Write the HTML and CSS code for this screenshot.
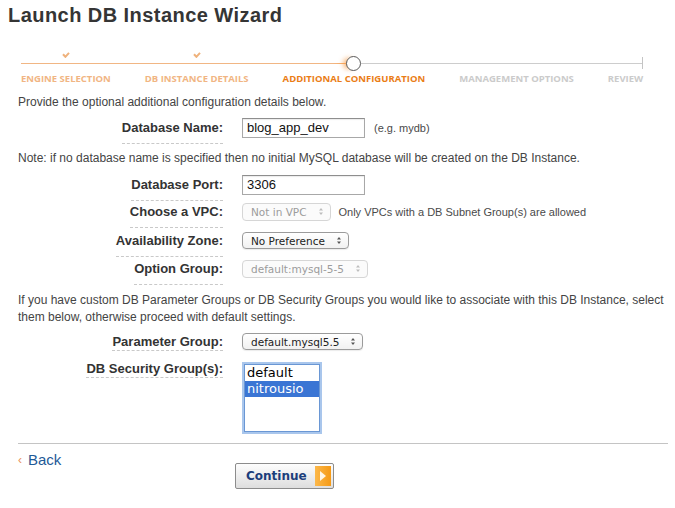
FILE: index.html
```html
<!DOCTYPE html>
<html>
<head>
<meta charset="utf-8">
<title>Launch DB Instance Wizard</title>
<link rel="stylesheet" href="styles.css">
</head>
<body>
<h1 class="title">Launch DB Instance Wizard</h1>

<div class="wizard-steps">
  <div class="step done">
    <span class="marker"><svg class="check" width="8" height="6" viewBox="0 0 8 6"><path d="M1 2.2 L3.4 4.8 L7 0.8" fill="none" stroke="#efb27c" stroke-width="2"/></svg></span>
    <span class="step-label">ENGINE SELECTION</span>
  </div>
  <div class="step done">
    <span class="marker"><svg class="check" width="8" height="6" viewBox="0 0 8 6"><path d="M1 2.2 L3.4 4.8 L7 0.8" fill="none" stroke="#efb27c" stroke-width="2"/></svg></span>
    <span class="step-label">DB INSTANCE DETAILS</span>
  </div>
  <div class="step current">
    <span class="marker"><span class="dot"></span></span>
    <span class="step-label">ADDITIONAL CONFIGURATION</span>
  </div>
  <div class="step">
    <span class="marker"></span>
    <span class="step-label">MANAGEMENT OPTIONS</span>
  </div>
  <div class="step last">
    <span class="marker"><span class="tick"></span></span>
    <span class="step-label">REVIEW</span>
  </div>
</div>

<div class="content">
  <p class="intro">Provide the optional additional configuration details below.</p>

  <div class="row r-name">
    <div class="label-cell"><span class="label">Database Name:</span></div>
    <input class="text-input" type="text" value="blog_app_dev">
    <span class="hint hint-name">(e.g. mydb)</span>
  </div>

  <p class="note">Note: if no database name is specified then no initial MySQL database will be created on the DB Instance.</p>

  <div class="row r-port">
    <div class="label-cell"><span class="label">Database Port:</span></div>
    <input class="text-input" type="text" value="3306">
  </div>

  <div class="row r-vpc">
    <div class="label-cell"><span class="label">Choose a VPC:</span></div>
    <div class="select disabled"><span>Not in VPC</span><svg class="arrows" width="4" height="7" viewBox="0 0 4 7"><path d="M2 0 L4 2.6 L0 2.6 Z M0 4.4 L4 4.4 L2 7 Z"/></svg></div>
    <span class="hint hint-vpc">Only VPCs with a DB Subnet Group(s) are allowed</span>
  </div>

  <div class="row r-az">
    <div class="label-cell"><span class="label">Availability Zone:</span></div>
    <div class="select"><span>No Preference</span><svg class="arrows" width="4" height="7" viewBox="0 0 4 7"><path d="M2 0 L4 2.6 L0 2.6 Z M0 4.4 L4 4.4 L2 7 Z"/></svg></div>
  </div>

  <div class="row r-opt">
    <div class="label-cell"><span class="label">Option Group:</span></div>
    <div class="select disabled"><span>default:mysql-5-5</span><svg class="arrows" width="4" height="7" viewBox="0 0 4 7"><path d="M2 0 L4 2.6 L0 2.6 Z M0 4.4 L4 4.4 L2 7 Z"/></svg></div>
  </div>

  <p class="para">If you have custom DB Parameter Groups or DB Security Groups you would like to associate with this DB Instance, select them below, otherwise proceed with default settings.</p>

  <div class="row r-param">
    <div class="label-cell"><span class="label">Parameter Group:</span></div>
    <div class="select"><span>default.mysql5.5</span><svg class="arrows" width="4" height="7" viewBox="0 0 4 7"><path d="M2 0 L4 2.6 L0 2.6 Z M0 4.4 L4 4.4 L2 7 Z"/></svg></div>
  </div>

  <div class="row r-sec">
    <div class="label-cell"><span class="label">DB Security Group(s):</span></div>
    <div class="listbox" role="listbox">
      <div class="option" role="option">default</div>
      <div class="option selected" role="option" aria-selected="true">nitrousio</div>
    </div>
  </div>

  <hr class="divider">

  <div class="footer">
    <a class="back" href="#"><span class="back-arrow">‹</span>Back</a>
    <button class="continue" type="button">Continue<span class="go"><svg width="6" height="10" viewBox="0 0 6 10"><path d="M0 0 L6 5 L0 10 Z" fill="#fff6e6"/></svg></span></button>
  </div>
</div>
</body>
</html>
```

FILE: styles.css
```css
html, body {
  margin: 0;
  padding: 0;
  background: #fff;
}

body {
  font-family: "Liberation Sans", Arial, sans-serif;
  font-size: 12px;
  color: #444;
}

.title {
  margin: 0;
  padding: 3px 0 0 8px;
  font-size: 20px;
  line-height: 24px;
  font-weight: bold;
  letter-spacing: 0.45px;
  color: #353535;
}

/* progress tracker */
.wizard-steps {
  display: flex;
  gap: 34px;
  margin: 23px 0 0 21px;
  width: max-content;
  background-image: linear-gradient(to right, #f1b684 0, #f1b684 312px, #f7a55a 325px, #cdcdcd 325px, #cdcdcd 100%);
  background-repeat: no-repeat;
  background-size: 100% 1px;
  background-position: 0 13px;
}

.step {
  display: flex;
  flex-direction: column;
  align-items: center;
}

.marker {
  display: flex;
  justify-content: center;
  align-items: flex-start;
  height: 21px;
  width: 100%;
}

.check {
  display: block;
  margin-top: 2px;
}

.dot {
  display: block;
  width: 15px;
  height: 15px;
  box-sizing: border-box;
  margin-top: 6px;
  border: 1.5px solid #5a5a5a;
  border-radius: 50%;
  background: #fff;
  box-shadow: -5px 0 5px -2px rgba(245, 160, 80, 0.75);
}

.last .marker {
  justify-content: flex-end;
}

.tick {
  display: block;
  width: 1px;
  height: 12px;
  margin-top: 7px;
  background: #c4c4c4;
}

.step-label {
  margin-top: 2px;
  font-family: "Open Sans", "Liberation Sans", sans-serif;
  font-weight: 700;
  font-size: 9.5px;
  line-height: 12px;
  white-space: nowrap;
  color: #cbcbcb;
}

.done .step-label {
  color: #f1b583;
}

.current .step-label {
  color: #ea7d16;
}

/* content */
.content {
  padding: 0 7px 0 18px;
}

.intro {
  margin: 9px 0 0;
  line-height: 16px;
}

.note {
  margin: 12px 0 0;
  line-height: 16px;
}

.para {
  margin: 13px 0 0;
  line-height: 17px;
}

.row {
  display: flex;
  align-items: center;
  height: 21px;
}

.r-name { margin-top: 7px; }
.r-port { margin-top: 8px; }
.r-vpc { margin-top: 6px; }
.r-az { margin-top: 8px; }
.r-opt { margin-top: 7px; }
.r-param { margin-top: 5px; }

.r-sec {
  margin-top: 10px;
  height: auto;
  align-items: flex-start;
}

.label-cell {
  width: 205px;
  margin-right: 19px;
  flex: none;
  text-align: right;
  line-height: 16px;
}

.r-sec .label-cell {
  line-height: 14px;
}

.label {
  font-size: 13px;
  font-weight: bold;
  color: #333;
  padding-bottom: 8px;
  border-bottom: 1px dashed #c9c9c9;
}

.r-param .label,
.r-sec .label {
  padding-bottom: 1px;
}

.text-input {
  box-sizing: border-box;
  width: 123px;
  height: 20px;
  margin: 0;
  padding: 0 4px;
  border: 1px solid #a8a8a8;
  border-top-color: #8e8e8e;
  box-shadow: inset 0 1px 1px rgba(0, 0, 0, 0.08);
  font-family: "Liberation Sans", Arial, sans-serif;
  font-size: 13px;
  line-height: 18px;
  color: #111;
  background: #fff;
  outline: none;
}

.hint {
  font-size: 11px;
  color: #4a4a4a;
}

.hint-name { margin-left: 9px; }
.hint-vpc { margin-left: 8px; }

.select {
  box-sizing: border-box;
  display: flex;
  align-items: center;
  gap: 12px;
  height: 17px;
  padding: 0 7px 0 8px;
  border: 1px solid #9b9b9b;
  border-radius: 4px;
  background: linear-gradient(#ffffff, #f1f1f1);
  box-shadow: 0 1px 1px rgba(0, 0, 0, 0.08);
  font-family: "DejaVu Sans", sans-serif;
  font-size: 10.5px;
  color: #222;
  white-space: nowrap;
}

.select .arrows {
  fill: #555;
  flex: none;
}

.select.disabled {
  height: 18px;
  border-color: #d6d6d6;
  color: #9c9c9c;
  box-shadow: none;
  background: #fbfbfb;
}

.select.disabled .arrows {
  fill: #bdbdbd;
}

.listbox {
  box-sizing: border-box;
  width: 76px;
  height: 68px;
  margin: 2px;
  border: 1px solid #6a97d4;
  box-shadow: 0 0 0 2px #a9c6ec;
  background: #fff;
  font-family: "DejaVu Sans", sans-serif;
  font-size: 13px;
  color: #000;
}

.option {
  height: 16px;
  line-height: 16px;
  padding: 0 2px;
  white-space: nowrap;
}

.option.selected {
  background: #3a75d4;
  color: #fff;
}

.divider {
  margin: 9px 0 0;
  border: 0;
  border-top: 1px solid #c4c4c4;
  height: 0;
}

.footer {
  display: flex;
  align-items: flex-start;
  margin-top: 7px;
}

.back {
  width: 217px;
  flex: none;
  font-size: 15px;
  line-height: 18px;
  color: #1e5a97;
  text-decoration: none;
}

.back-arrow {
  font-size: 12px;
  color: #e9925a;
  margin-right: 6px;
  vertical-align: 1px;
}

.continue {
  display: flex;
  align-items: center;
  gap: 8px;
  margin-top: 12px;
  height: 26px;
  padding: 0 2px 0 10px;
  border: 1px solid #8c8c8c;
  border-radius: 2px;
  background: linear-gradient(#fdfdfd, #dedede);
  font-family: "DejaVu Sans", sans-serif;
  font-weight: bold;
  font-size: 12px;
  color: #1c3e7b;
  cursor: pointer;
}

.go {
  display: flex;
  align-items: center;
  justify-content: center;
  width: 16px;
  height: 20px;
  background: linear-gradient(to right, #fcb84a, #f59a16);
}
```
